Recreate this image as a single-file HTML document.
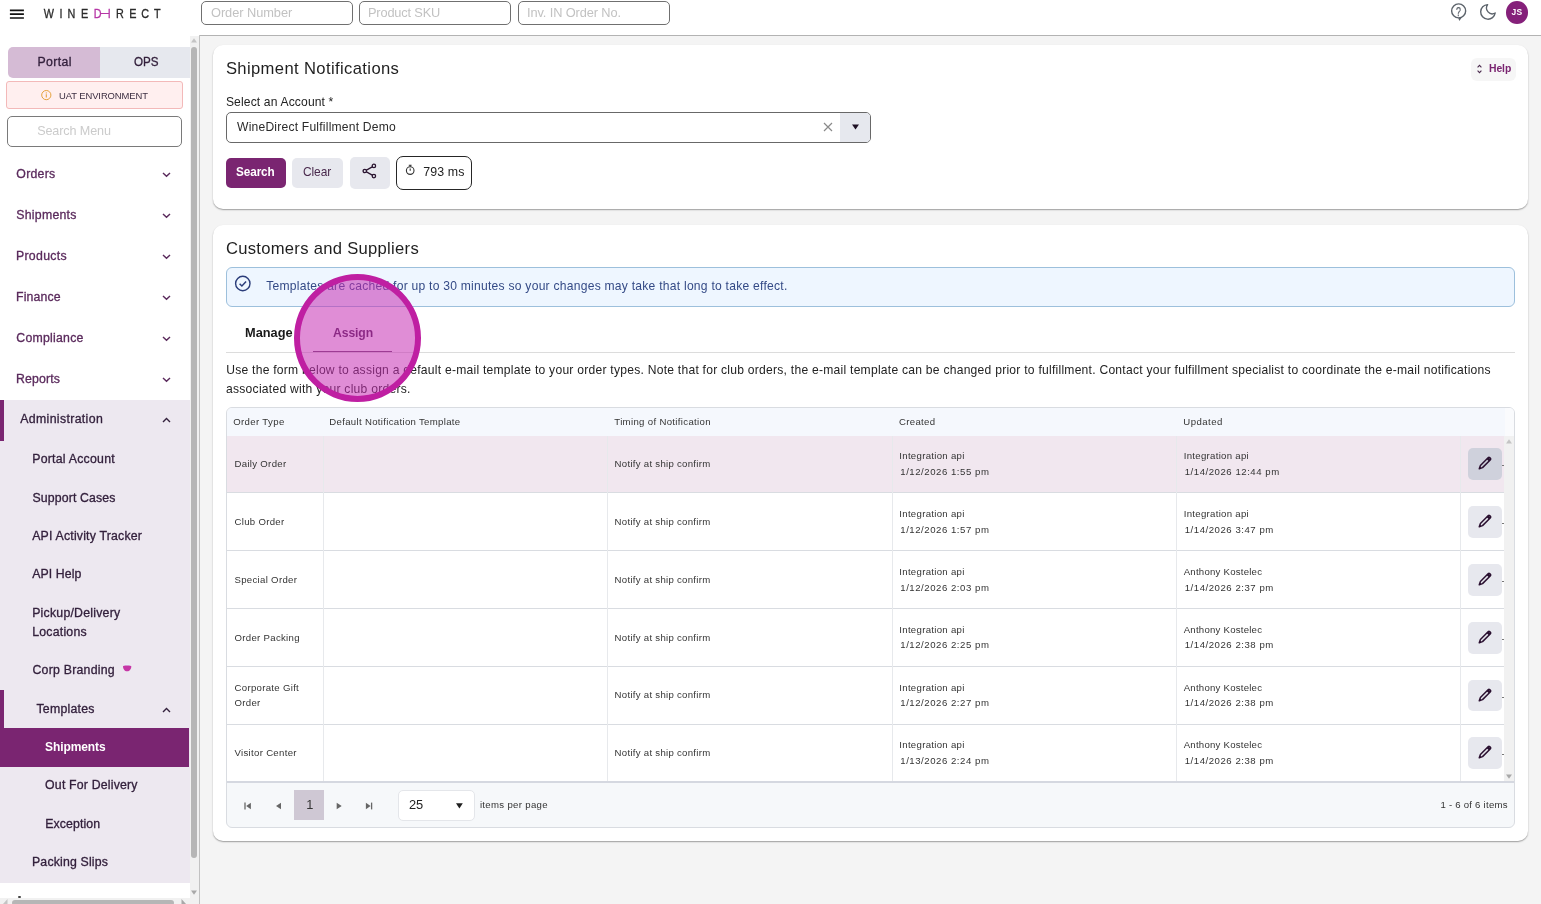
<!DOCTYPE html>
<html lang="en"><head><meta charset="utf-8"><title>Shipment Notifications</title>
<style>
*{box-sizing:border-box;margin:0;padding:0}
html,body{width:1541px;height:904px;overflow:hidden;background:#f4f4f4;font-family:"Liberation Sans",sans-serif;color:#222}
.a{position:absolute;white-space:nowrap}
#txt{position:absolute;left:0;top:0;width:1541px;height:904px;will-change:transform}
.inp{height:24.5px;top:0.5px;border:1px solid #707070;border-radius:5px;background:#fff}
.card{background:#fff;border-radius:10px;box-shadow:0 1px 1.5px rgba(0,0,0,.36)}
.hl{left:227px;width:1277px;height:1px;background:#d9dce1}
.vl{width:1px;background:#e7e9ec;top:436px;height:346px}
.eb{left:1468px;width:34px;height:31.5px;border-radius:5px;background:#e7e8ee}
.chev{left:162px}
</style></head><body>
<div class="a" style="left:0;top:0;width:1541px;height:36px;background:#fff"></div>
<div class="a" style="left:199px;top:35px;width:1342px;height:1px;background:#b3b3b3"></div>
<svg class="a" style="left:9px;top:8px" width="16" height="12" viewBox="0 0 16 12"><path d="M.9 2.4h14M.9 6.2h14M.9 10h14" stroke="#111" stroke-width="1.7"/></svg>
<svg class="a" style="left:0;top:0;will-change:transform" width="200" height="30" viewBox="0 0 200 30"><text transform="scale(0.88,1)" x="49.71 67.57 76.72 91.98 106.66 122.40 131.88 146.76 160.48 175.12" y="17.8" font-family="Liberation Sans, sans-serif" font-size="12.3" fill="#2b2b2b" stroke="#2b2b2b" stroke-width=".3">WINE<tspan fill="#b636a6" stroke="#b636a6">DI</tspan>RECT</text></svg>
<div class="a" style="left:101px;top:12.8px;width:8px;height:1.2px;background:#b636a6"></div>
<div class="a inp" style="left:201px;width:152px"></div>
<div class="a inp" style="left:359px;width:152px"></div>
<div class="a inp" style="left:518px;width:152px"></div>
<svg class="a" style="left:1450px;top:2px" width="18" height="20" viewBox="0 0 18 20"><circle cx="8.65" cy="8.9" r="7" fill="none" stroke="#5c636b" stroke-width="1.4"/><path d="M8.3 16.1L9.3 18.9 12 15.2z" fill="#5c636b"/></svg>
<svg class="a" style="left:1479px;top:3px" width="18" height="18" viewBox="0 0 18 18"><path d="M8.6 1.6A7.3 7.3 0 1 0 16.2 10 5.8 5.8 0 0 1 8.6 1.6z" fill="none" stroke="#5c636b" stroke-width="1.4" stroke-linejoin="round"/></svg>
<div class="a" style="left:1506px;top:1px;width:22px;height:22.5px;border-radius:50%;background:#85207a"></div>
<div class="a" style="left:0;top:36px;width:190px;height:868px;background:#fff"></div>
<div class="a" style="left:8px;top:47px;width:92px;height:30.5px;background:#d5bbd5;border-radius:5px 0 0 5px"></div>
<div class="a" style="left:100px;top:47px;width:90px;height:30.5px;background:#e6e8ee"></div>
<div class="a" style="left:6px;top:81px;width:177px;height:28px;background:#ffefef;border:1px solid #f3b9b9;border-radius:3px"></div>
<svg class="a" style="left:40px;top:89px" width="12" height="12" viewBox="0 0 12 12"><circle cx="6.3" cy="6.1" r="4.6" fill="none" stroke="#e6a23c" stroke-width="1"/><path d="M6.3 5.3v3.2" stroke="#e6a23c" stroke-width="1.1"/><circle cx="6.3" cy="3.9" r=".6" fill="#e6a23c"/></svg>
<div class="a" style="left:7px;top:116px;width:175px;height:31px;border:1px solid #7a7a7a;border-radius:5px;background:#fff"></div>
<svg class="a" style="left:162px;top:171.5px" width="9" height="6" viewBox="0 0 9 6"><path d="M1 .9L4.5 4.3 8 .9" fill="none" stroke="#5a2a5c" stroke-width="1.4"/></svg>
<svg class="a" style="left:162px;top:212.5px" width="9" height="6" viewBox="0 0 9 6"><path d="M1 .9L4.5 4.3 8 .9" fill="none" stroke="#5a2a5c" stroke-width="1.4"/></svg>
<svg class="a" style="left:162px;top:253.5px" width="9" height="6" viewBox="0 0 9 6"><path d="M1 .9L4.5 4.3 8 .9" fill="none" stroke="#5a2a5c" stroke-width="1.4"/></svg>
<svg class="a" style="left:162px;top:294.5px" width="9" height="6" viewBox="0 0 9 6"><path d="M1 .9L4.5 4.3 8 .9" fill="none" stroke="#5a2a5c" stroke-width="1.4"/></svg>
<svg class="a" style="left:162px;top:335.5px" width="9" height="6" viewBox="0 0 9 6"><path d="M1 .9L4.5 4.3 8 .9" fill="none" stroke="#5a2a5c" stroke-width="1.4"/></svg>
<svg class="a" style="left:162px;top:376.5px" width="9" height="6" viewBox="0 0 9 6"><path d="M1 .9L4.5 4.3 8 .9" fill="none" stroke="#5a2a5c" stroke-width="1.4"/></svg>
<div class="a" style="left:0;top:400px;width:190px;height:483px;background:#ede8f0"></div>
<div class="a" style="left:0;top:400px;width:4px;height:41px;background:#7a2571"></div>
<div class="a" style="left:0;top:690px;width:4px;height:38px;background:#7a2571"></div>
<div class="a" style="left:0;top:728px;width:189px;height:38.5px;background:#7a2571"></div>
<svg class="a" style="left:162px;top:417px" width="9" height="6" viewBox="0 0 9 6"><path d="M1 4.9L4.5 1.5 8 4.9" fill="none" stroke="#33203c" stroke-width="1.4"/></svg>
<svg class="a" style="left:162px;top:707px" width="9" height="6" viewBox="0 0 9 6"><path d="M1 4.9L4.5 1.5 8 4.9" fill="none" stroke="#33203c" stroke-width="1.4"/></svg>
<svg class="a" style="left:122px;top:662px" width="11" height="11" viewBox="0 0 11 11"><ellipse cx="5.1" cy="3.2" rx="3.2" ry="1.2" fill="#e8eef8"/><path d="M1 4.2C1 3.7 2.5 3.5 5.1 3.5S9.3 3.7 9.3 4.2C9.3 7 7.6 9.3 5.1 9.3S1 7 1 4.2z" fill="#c636a6"/></svg>
<div class="a" style="left:18px;top:896px;width:3px;height:2px;background:#444;border-radius:1px"></div>
<div class="a" style="left:189.5px;top:36px;width:9.5px;height:868px;background:#f1f1f1"></div>
<svg class="a" style="left:191px;top:38px" width="6" height="5" viewBox="0 0 6 5"><path d="M0 4.5L3 .3 6 4.5z" fill="#c4c4c4"/></svg>
<div class="a" style="left:191px;top:47px;width:6px;height:811px;background:#b6b6b6;border-radius:3px"></div>
<svg class="a" style="left:191px;top:890px" width="6" height="5" viewBox="0 0 6 5"><path d="M0 .5L3 4.7 6 .5z" fill="#a8a8a8"/></svg>
<div class="a" style="left:0;top:898px;width:189.5px;height:6px;background:#f1f1f1"></div>
<div class="a" style="left:12px;top:900px;width:162px;height:6px;background:#b6b6b6;border-radius:3px"></div>
<svg class="a" style="left:181px;top:899px" width="6" height="6" viewBox="0 0 6 6"><path d="M.5 0L5 5 .5 10z" fill="#a8a8a8"/></svg>
<svg class="a" style="left:2px;top:899px" width="6" height="6" viewBox="0 0 6 6"><path d="M5.5 0L1 5 5.5 10z" fill="#c4c4c4"/></svg>
<div class="a" style="left:199px;top:35px;width:1px;height:869px;background:#c2c2c2"></div>
<div class="a card" style="left:212.5px;top:45px;width:1315.5px;height:164px"></div>
<div class="a" style="left:226px;top:112px;width:645px;height:31px;border:1px solid #686868;border-radius:5px;background:#fff;overflow:hidden"><div class="a" style="right:0;top:0;width:30px;height:29px;background:#e6e8ee"></div></div>
<svg class="a" style="left:823px;top:122px" width="10" height="10" viewBox="0 0 10 10"><path d="M1 1l8 8M9 1l-8 8" stroke="#8a8a8a" stroke-width="1.2"/></svg>
<svg class="a" style="left:852px;top:124px" width="7" height="6" viewBox="0 0 7 6"><path d="M0 .4h7L3.5 5.4z" fill="#1e1024"/></svg>
<div class="a" style="left:226px;top:158px;width:60px;height:30px;border-radius:5px;background:#7a2571"></div>
<div class="a" style="left:292.2px;top:158px;width:50.6px;height:29.5px;border-radius:5px;background:#e7e8ee"></div>
<div class="a" style="left:350px;top:157px;width:40px;height:32px;border-radius:5px;background:#e7e8ee"></div>
<svg class="a" style="left:361px;top:163px" width="17" height="17" viewBox="0 0 17 17"><path d="M12.6 3.1L4 8l8.6 4.9" fill="none" stroke="#2a1430" stroke-width="1.4"/><circle cx="12.9" cy="2.9" r="1.7" fill="#e7e8ee" stroke="#2a1430" stroke-width="1.3"/><circle cx="12.9" cy="13.1" r="1.7" fill="#e7e8ee" stroke="#2a1430" stroke-width="1.3"/><circle cx="3.8" cy="8" r="1.7" fill="#e7e8ee" stroke="#2a1430" stroke-width="1.3"/></svg>
<div class="a" style="left:396px;top:156px;width:76px;height:33.5px;border-radius:7px;border:1px solid #262626;background:#fff"></div>
<svg class="a" style="left:404px;top:163px" width="12" height="13" viewBox="0 0 12 13"><circle cx="6.2" cy="7.6" r="3.8" fill="none" stroke="#333" stroke-width="1.1"/><path d="M4.8 2.2h2.8M6.2 2.4v1.4M6.2 5.6v2.2" stroke="#333" stroke-width="1.1"/></svg>
<div class="a" style="left:1471px;top:58px;width:44.5px;height:22.5px;border-radius:6px;background:#f6f6f6"></div>
<svg class="a" style="left:1476px;top:63px" width="7" height="12" viewBox="0 0 7 12"><path d="M1.6 4.3L3.5 2.4 5.4 4.3M1.6 7.7L3.5 9.6 5.4 7.7" fill="none" stroke="#4a2a4d" stroke-width="1.1"/></svg>
<div class="a card" style="left:212.5px;top:225px;width:1315.5px;height:616px"></div>
<div class="a" style="left:226px;top:267px;width:1288.7px;height:39.5px;border:1px solid #9dc0dc;border-radius:6px;background:#eef6ff"></div>
<svg class="a" style="left:234px;top:275px" width="17" height="17" viewBox="0 0 17 17"><circle cx="8.8" cy="8.5" r="7.2" fill="none" stroke="#2b3d7a" stroke-width="1.4"/><path d="M5.6 8.7l2.3 2.3 4.2-4.4" fill="none" stroke="#2b3d7a" stroke-width="1.5"/></svg>
<div class="a" style="left:226px;top:352px;width:1288.7px;height:1px;background:#dcdcdc"></div>
<div class="a" style="left:313px;top:351px;width:79px;height:1px;background:#6b4a6e"></div>
<div class="a" style="left:226px;top:407px;width:1289px;height:421px;border:1px solid #d9dce1;border-radius:6px;background:#f6f8fa"></div>
<div class="a" style="left:227px;top:408px;width:1287px;height:28px;background:#f5f8fd;border-radius:5px 5px 0 0"></div>
<div class="a" style="left:1505px;top:408px;width:9px;height:28px;background:#fafbfd;border-radius:0 5px 0 0"></div>
<div class="a" style="left:227px;top:436px;width:1277px;height:57px;background:#f1e7ef"></div>
<div class="a" style="left:227px;top:493px;width:1277px;height:289px;background:#fff"></div>
<div class="a hl" style="top:492px"></div>
<div class="a hl" style="top:550px"></div>
<div class="a hl" style="top:608px"></div>
<div class="a hl" style="top:666px"></div>
<div class="a hl" style="top:724px"></div>
<div class="a vl" style="left:323px"></div>
<div class="a vl" style="left:607px"></div>
<div class="a vl" style="left:892px"></div>
<div class="a vl" style="left:1176px"></div>
<div class="a vl" style="left:1460px"></div>
<div class="a eb" style="top:448px;background:#cfd1dc"></div>
<svg class="a" style="left:1476.8px;top:455.2px" width="16" height="16" viewBox="-8 -8 16 16"><g transform="rotate(-45)"><path d="M-8.1 0L-5-1.5H6.2a.9.9 0 0 1 .9.9V.6a.9.9 0 0 1-.9.9H-5z" fill="none" stroke="#2a1030" stroke-width="1.5" stroke-linejoin="round"/><path d="M3.9-1.5h2.6v3H3.9z" fill="#2a1030"/></g></svg>
<div class="a" style="left:1502px;top:465px;width:2px;height:1px;background:#777"></div>
<div class="a eb" style="top:506px;background:#e7e8ee"></div>
<svg class="a" style="left:1476.8px;top:513.2px" width="16" height="16" viewBox="-8 -8 16 16"><g transform="rotate(-45)"><path d="M-8.1 0L-5-1.5H6.2a.9.9 0 0 1 .9.9V.6a.9.9 0 0 1-.9.9H-5z" fill="none" stroke="#2a1030" stroke-width="1.5" stroke-linejoin="round"/><path d="M3.9-1.5h2.6v3H3.9z" fill="#2a1030"/></g></svg>
<div class="a" style="left:1502px;top:523px;width:2px;height:1px;background:#777"></div>
<div class="a eb" style="top:564px;background:#e7e8ee"></div>
<svg class="a" style="left:1476.8px;top:571.2px" width="16" height="16" viewBox="-8 -8 16 16"><g transform="rotate(-45)"><path d="M-8.1 0L-5-1.5H6.2a.9.9 0 0 1 .9.9V.6a.9.9 0 0 1-.9.9H-5z" fill="none" stroke="#2a1030" stroke-width="1.5" stroke-linejoin="round"/><path d="M3.9-1.5h2.6v3H3.9z" fill="#2a1030"/></g></svg>
<div class="a" style="left:1502px;top:581px;width:2px;height:1px;background:#777"></div>
<div class="a eb" style="top:622px;background:#e7e8ee"></div>
<svg class="a" style="left:1476.8px;top:629.2px" width="16" height="16" viewBox="-8 -8 16 16"><g transform="rotate(-45)"><path d="M-8.1 0L-5-1.5H6.2a.9.9 0 0 1 .9.9V.6a.9.9 0 0 1-.9.9H-5z" fill="none" stroke="#2a1030" stroke-width="1.5" stroke-linejoin="round"/><path d="M3.9-1.5h2.6v3H3.9z" fill="#2a1030"/></g></svg>
<div class="a" style="left:1502px;top:639px;width:2px;height:1px;background:#777"></div>
<div class="a eb" style="top:679.5px;background:#e7e8ee"></div>
<svg class="a" style="left:1476.8px;top:686.7px" width="16" height="16" viewBox="-8 -8 16 16"><g transform="rotate(-45)"><path d="M-8.1 0L-5-1.5H6.2a.9.9 0 0 1 .9.9V.6a.9.9 0 0 1-.9.9H-5z" fill="none" stroke="#2a1030" stroke-width="1.5" stroke-linejoin="round"/><path d="M3.9-1.5h2.6v3H3.9z" fill="#2a1030"/></g></svg>
<div class="a" style="left:1502px;top:696.5px;width:2px;height:1px;background:#777"></div>
<div class="a eb" style="top:737px;background:#e7e8ee"></div>
<svg class="a" style="left:1476.8px;top:744.2px" width="16" height="16" viewBox="-8 -8 16 16"><g transform="rotate(-45)"><path d="M-8.1 0L-5-1.5H6.2a.9.9 0 0 1 .9.9V.6a.9.9 0 0 1-.9.9H-5z" fill="none" stroke="#2a1030" stroke-width="1.5" stroke-linejoin="round"/><path d="M3.9-1.5h2.6v3H3.9z" fill="#2a1030"/></g></svg>
<div class="a" style="left:1502px;top:754px;width:2px;height:1px;background:#777"></div>
<div class="a" style="left:1504px;top:436px;width:10px;height:346px;background:#f1f1f1"></div>
<svg class="a" style="left:1506px;top:439px" width="6" height="5" viewBox="0 0 6 5"><path d="M0 4.5L3 .3 6 4.5z" fill="#c4c4c4"/></svg>
<svg class="a" style="left:1506px;top:774px" width="6" height="5" viewBox="0 0 6 5"><path d="M0 .5L3 4.7 6 .5z" fill="#a8a8a8"/></svg>
<div class="a" style="left:227px;top:781px;width:1287px;height:2px;background:#d5d8e0"></div>
<div class="a" style="left:294px;top:790px;width:30px;height:30px;background:#cfc8d4"></div>
<svg class="a" style="left:244px;top:801.5px" width="8" height="8" viewBox="0 0 8 8"><path d="M1 .6v6.8" stroke="#666" stroke-width="1.3"/><path d="M6.9 .8v6.4L2.2 4z" fill="#666"/></svg>
<svg class="a" style="left:275px;top:801.5px" width="8" height="8" viewBox="0 0 8 8"><path d="M6 .8v6.4L1 4z" fill="#666"/></svg>
<svg class="a" style="left:335px;top:801.5px" width="8" height="8" viewBox="0 0 8 8"><path d="M1.7 .8v6.4L6.7 4z" fill="#666"/></svg>
<svg class="a" style="left:365px;top:801.5px" width="8" height="8" viewBox="0 0 8 8"><path d="M6.6 .6v6.8" stroke="#666" stroke-width="1.3"/><path d="M.9 .8v6.4L5.6 4z" fill="#666"/></svg>
<div class="a" style="left:398px;top:790px;width:76.5px;height:30.5px;background:#fff;border:1px solid #e4e6ea;border-radius:5px"></div>
<svg class="a" style="left:456px;top:802.5px" width="7" height="6" viewBox="0 0 7 6"><path d="M0 .3h6.8L3.4 5.6z" fill="#1f1f1f"/></svg>

<!-- TEXT -->
<div id="txt">
<div class="a" style="left:211.00px;top:4px;font-size:12.8px;line-height:17px;letter-spacing:-0.047px;color:#c2c2c2">Order Number</div>
<div class="a" style="left:368.00px;top:4px;font-size:12.8px;line-height:17px;letter-spacing:-0.173px;color:#c2c2c2">Product SKU</div>
<div class="a" style="left:527.00px;top:4px;font-size:12.8px;line-height:17px;letter-spacing:-0.107px;color:#c2c2c2">Inv. IN Order No.</div>
<div class="a" style="left:37.50px;top:54px;font-size:12.3px;line-height:16px;letter-spacing:0.362px;color:#33203c;-webkit-text-stroke:0.3px #33203c">Portal</div>
<div class="a" style="left:133.80px;top:54px;font-size:12.3px;line-height:16px;letter-spacing:-0.100px;color:#33203c;-webkit-text-stroke:0.3px #33203c;transform-origin:0 50%;transform:scaleX(0.9465)">OPS</div>
<div class="a" style="left:59.10px;top:89px;font-size:9.8px;line-height:13px;letter-spacing:-0.100px;color:#3d2f42;transform-origin:0 50%;transform:scaleX(0.9633)">UAT ENVIRONMENT</div>
<div class="a" style="left:37.20px;top:123px;font-size:12.6px;line-height:16px;letter-spacing:-0.110px;color:#cbcbcb">Search Menu</div>
<div class="a" style="left:16.30px;top:166px;font-size:12.3px;line-height:16px;letter-spacing:0.273px;color:#5a2a5c;-webkit-text-stroke:0.3px #5a2a5c">Orders</div>
<div class="a" style="left:16.30px;top:207px;font-size:12.3px;line-height:16px;letter-spacing:0.256px;color:#5a2a5c;-webkit-text-stroke:0.3px #5a2a5c">Shipments</div>
<div class="a" style="left:16.00px;top:248px;font-size:12.3px;line-height:16px;letter-spacing:0.289px;color:#5a2a5c;-webkit-text-stroke:0.3px #5a2a5c">Products</div>
<div class="a" style="left:16.00px;top:289px;font-size:12.3px;line-height:16px;letter-spacing:0.149px;color:#5a2a5c;-webkit-text-stroke:0.3px #5a2a5c">Finance</div>
<div class="a" style="left:16.30px;top:330px;font-size:12.3px;line-height:16px;letter-spacing:0.245px;color:#5a2a5c;-webkit-text-stroke:0.3px #5a2a5c">Compliance</div>
<div class="a" style="left:16.00px;top:371px;font-size:12.3px;line-height:16px;letter-spacing:0.132px;color:#5a2a5c;-webkit-text-stroke:0.3px #5a2a5c">Reports</div>
<div class="a" style="left:20.20px;top:411px;font-size:12.3px;line-height:16px;letter-spacing:0.356px;color:#33203c;-webkit-text-stroke:0.3px #33203c">Administration</div>
<div class="a" style="left:32.20px;top:451px;font-size:12.3px;line-height:16px;letter-spacing:0.242px;color:#33203c;-webkit-text-stroke:0.3px #33203c">Portal Account</div>
<div class="a" style="left:32.50px;top:490px;font-size:12.3px;line-height:16px;letter-spacing:0.126px;color:#33203c;-webkit-text-stroke:0.3px #33203c">Support Cases</div>
<div class="a" style="left:32.20px;top:528px;font-size:12.3px;line-height:16px;letter-spacing:0.199px;color:#33203c;-webkit-text-stroke:0.3px #33203c">API Activity Tracker</div>
<div class="a" style="left:32.20px;top:566px;font-size:12.3px;line-height:16px;letter-spacing:0.102px;color:#33203c;-webkit-text-stroke:0.3px #33203c">API Help</div>
<div class="a" style="left:32.20px;top:605px;font-size:12.3px;line-height:16px;letter-spacing:0.229px;color:#33203c;-webkit-text-stroke:0.3px #33203c">Pickup/Delivery</div>
<div class="a" style="left:32.20px;top:624px;font-size:12.3px;line-height:16px;letter-spacing:0.226px;color:#33203c;-webkit-text-stroke:0.3px #33203c">Locations</div>
<div class="a" style="left:32.50px;top:662px;font-size:12.3px;line-height:16px;letter-spacing:0.237px;color:#33203c;-webkit-text-stroke:0.3px #33203c">Corp Branding</div>
<div class="a" style="left:36.50px;top:701px;font-size:12.3px;line-height:16px;letter-spacing:0.226px;color:#33203c;-webkit-text-stroke:0.3px #33203c">Templates</div>
<div class="a" style="left:44.70px;top:738px;font-size:12.8px;line-height:17px;letter-spacing:-0.100px;color:#fff;font-weight:bold;transform-origin:0 50%;transform:scaleX(0.9380)">Shipments</div>
<div class="a" style="left:45.10px;top:777px;font-size:12.3px;line-height:16px;letter-spacing:0.189px;color:#33203c;-webkit-text-stroke:0.3px #33203c">Out For Delivery</div>
<div class="a" style="left:45.20px;top:816px;font-size:12.3px;line-height:16px;letter-spacing:0.104px;color:#33203c;-webkit-text-stroke:0.3px #33203c">Exception</div>
<div class="a" style="left:32.00px;top:854px;font-size:12.3px;line-height:16px;letter-spacing:0.169px;color:#33203c;-webkit-text-stroke:0.3px #33203c">Packing Slips</div>
<div class="a" style="left:225.90px;top:58px;font-size:16.6px;line-height:22px;letter-spacing:0.376px;color:#1f1f1f">Shipment Notifications</div>
<div class="a" style="left:225.90px;top:94px;font-size:12.1px;line-height:16px;letter-spacing:0.142px;color:#222">Select an Account *</div>
<div class="a" style="left:237.00px;top:119px;font-size:12.1px;line-height:16px;letter-spacing:0.212px;color:#2a2a2a">WineDirect Fulfillment Demo</div>
<div class="a" style="left:236.40px;top:163px;font-size:12.8px;line-height:17px;letter-spacing:-0.100px;color:#fff;font-weight:bold;transform-origin:0 50%;transform:scaleX(0.9182)">Search</div>
<div class="a" style="left:303.00px;top:163px;font-size:12.8px;line-height:17px;letter-spacing:-0.100px;color:#4a2a4d;transform-origin:0 50%;transform:scaleX(0.9347)">Clear</div>
<div class="a" style="left:423.30px;top:164px;font-size:12.4px;line-height:16px;letter-spacing:0.113px;color:#222">793 ms</div>
<div class="a" style="left:1489.30px;top:61px;font-size:11px;line-height:14px;letter-spacing:-0.100px;color:#7a2571;font-weight:bold;transform-origin:0 50%;transform:scaleX(0.9447)">Help</div>
<div class="a" style="left:225.90px;top:238px;font-size:16.6px;line-height:22px;letter-spacing:0.295px;color:#1f1f1f">Customers and Suppliers</div>
<div class="a" style="left:266.20px;top:278px;font-size:12.1px;line-height:16px;letter-spacing:0.247px;color:#344a86">Templates are cached for up to 30 minutes so your changes may take that long to take effect.</div>
<div class="a" style="left:245.00px;top:324px;font-size:12.8px;line-height:17px;letter-spacing:-0.006px;color:#1a1a1a;font-weight:bold">Manage</div>
<div class="a" style="left:332.50px;top:325px;font-size:12.6px;line-height:16px;letter-spacing:-0.100px;color:#431f4b;font-weight:bold;transform-origin:0 50%;transform:scaleX(0.9683)">Assign</div>
<div class="a" style="left:226.20px;top:362px;font-size:12.1px;line-height:16px;letter-spacing:0.248px;color:#222">Use the form below to assign a default e-mail template to your order types. Note that for club orders, the e-mail template can be changed prior to fulfillment. Contact your fulfillment specialist to coordinate the e-mail notifications</div>
<div class="a" style="left:226.00px;top:381px;font-size:12.1px;line-height:16px;letter-spacing:0.258px;color:#222">associated with your club orders.</div>
<div class="a" style="left:233.20px;top:416px;font-size:9.6px;line-height:12px;letter-spacing:0.361px;color:#343434">Order Type</div>
<div class="a" style="left:329.30px;top:416px;font-size:9.6px;line-height:12px;letter-spacing:0.319px;color:#343434">Default Notification Template</div>
<div class="a" style="left:614.30px;top:416px;font-size:9.6px;line-height:12px;letter-spacing:0.334px;color:#343434">Timing of Notification</div>
<div class="a" style="left:898.90px;top:416px;font-size:9.6px;line-height:12px;letter-spacing:0.351px;color:#343434">Created</div>
<div class="a" style="left:1183.30px;top:416px;font-size:9.6px;line-height:12px;letter-spacing:0.461px;color:#343434">Updated</div>
<div class="a" style="left:234.50px;top:458px;font-size:9.6px;line-height:12px;letter-spacing:0.310px;color:#343434">Daily Order</div>
<div class="a" style="left:614.60px;top:458px;font-size:9.6px;line-height:12px;letter-spacing:0.287px;color:#343434">Notify at ship confirm</div>
<div class="a" style="left:899.30px;top:450px;font-size:9.6px;line-height:12px;letter-spacing:0.302px;color:#343434">Integration api</div>
<div class="a" style="left:900.30px;top:466px;font-size:9.6px;line-height:12px;letter-spacing:0.536px;color:#343434">1/12/2026 1:55 pm</div>
<div class="a" style="left:1183.70px;top:450px;font-size:9.6px;line-height:12px;letter-spacing:0.302px;color:#343434">Integration api</div>
<div class="a" style="left:1184.70px;top:466px;font-size:9.6px;line-height:12px;letter-spacing:0.538px;color:#343434">1/14/2026 12:44 pm</div>
<div class="a" style="left:234.50px;top:516px;font-size:9.6px;line-height:12px;letter-spacing:0.310px;color:#343434">Club Order</div>
<div class="a" style="left:614.60px;top:516px;font-size:9.6px;line-height:12px;letter-spacing:0.287px;color:#343434">Notify at ship confirm</div>
<div class="a" style="left:899.30px;top:508px;font-size:9.6px;line-height:12px;letter-spacing:0.302px;color:#343434">Integration api</div>
<div class="a" style="left:900.30px;top:524px;font-size:9.6px;line-height:12px;letter-spacing:0.536px;color:#343434">1/12/2026 1:57 pm</div>
<div class="a" style="left:1183.70px;top:508px;font-size:9.6px;line-height:12px;letter-spacing:0.302px;color:#343434">Integration api</div>
<div class="a" style="left:1184.70px;top:524px;font-size:9.6px;line-height:12px;letter-spacing:0.536px;color:#343434">1/14/2026 3:47 pm</div>
<div class="a" style="left:234.50px;top:574px;font-size:9.6px;line-height:12px;letter-spacing:0.310px;color:#343434">Special Order</div>
<div class="a" style="left:614.60px;top:574px;font-size:9.6px;line-height:12px;letter-spacing:0.287px;color:#343434">Notify at ship confirm</div>
<div class="a" style="left:899.30px;top:566px;font-size:9.6px;line-height:12px;letter-spacing:0.302px;color:#343434">Integration api</div>
<div class="a" style="left:900.30px;top:582px;font-size:9.6px;line-height:12px;letter-spacing:0.536px;color:#343434">1/12/2026 2:03 pm</div>
<div class="a" style="left:1183.70px;top:566px;font-size:9.6px;line-height:12px;letter-spacing:0.242px;color:#343434">Anthony Kostelec</div>
<div class="a" style="left:1184.70px;top:582px;font-size:9.6px;line-height:12px;letter-spacing:0.536px;color:#343434">1/14/2026 2:37 pm</div>
<div class="a" style="left:234.50px;top:632px;font-size:9.6px;line-height:12px;letter-spacing:0.310px;color:#343434">Order Packing</div>
<div class="a" style="left:614.60px;top:632px;font-size:9.6px;line-height:12px;letter-spacing:0.287px;color:#343434">Notify at ship confirm</div>
<div class="a" style="left:899.30px;top:624px;font-size:9.6px;line-height:12px;letter-spacing:0.302px;color:#343434">Integration api</div>
<div class="a" style="left:900.30px;top:639px;font-size:9.6px;line-height:12px;letter-spacing:0.536px;color:#343434">1/12/2026 2:25 pm</div>
<div class="a" style="left:1183.70px;top:624px;font-size:9.6px;line-height:12px;letter-spacing:0.242px;color:#343434">Anthony Kostelec</div>
<div class="a" style="left:1184.70px;top:639px;font-size:9.6px;line-height:12px;letter-spacing:0.536px;color:#343434">1/14/2026 2:38 pm</div>
<div class="a" style="left:234.50px;top:682px;font-size:9.6px;line-height:12px;letter-spacing:0.310px;color:#343434">Corporate Gift</div>
<div class="a" style="left:234.50px;top:697px;font-size:9.6px;line-height:12px;letter-spacing:0.310px;color:#343434">Order</div>
<div class="a" style="left:614.60px;top:689px;font-size:9.6px;line-height:12px;letter-spacing:0.287px;color:#343434">Notify at ship confirm</div>
<div class="a" style="left:899.30px;top:682px;font-size:9.6px;line-height:12px;letter-spacing:0.302px;color:#343434">Integration api</div>
<div class="a" style="left:900.30px;top:697px;font-size:9.6px;line-height:12px;letter-spacing:0.536px;color:#343434">1/12/2026 2:27 pm</div>
<div class="a" style="left:1183.70px;top:682px;font-size:9.6px;line-height:12px;letter-spacing:0.242px;color:#343434">Anthony Kostelec</div>
<div class="a" style="left:1184.70px;top:697px;font-size:9.6px;line-height:12px;letter-spacing:0.536px;color:#343434">1/14/2026 2:38 pm</div>
<div class="a" style="left:234.50px;top:747px;font-size:9.6px;line-height:12px;letter-spacing:0.310px;color:#343434">Visitor Center</div>
<div class="a" style="left:614.60px;top:747px;font-size:9.6px;line-height:12px;letter-spacing:0.287px;color:#343434">Notify at ship confirm</div>
<div class="a" style="left:899.30px;top:739px;font-size:9.6px;line-height:12px;letter-spacing:0.302px;color:#343434">Integration api</div>
<div class="a" style="left:900.30px;top:755px;font-size:9.6px;line-height:12px;letter-spacing:0.536px;color:#343434">1/13/2026 2:24 pm</div>
<div class="a" style="left:1183.70px;top:739px;font-size:9.6px;line-height:12px;letter-spacing:0.242px;color:#343434">Anthony Kostelec</div>
<div class="a" style="left:1184.70px;top:755px;font-size:9.6px;line-height:12px;letter-spacing:0.536px;color:#343434">1/14/2026 2:38 pm</div>
<div class="a" style="left:306.20px;top:796px;font-size:12.8px;line-height:17px;letter-spacing:0.000px;color:#333">1</div>
<div class="a" style="left:409.10px;top:796px;font-size:13.2px;line-height:17px;letter-spacing:-0.100px;color:#222;transform-origin:0 50%;transform:scaleX(0.9765)">25</div>
<div class="a" style="left:479.90px;top:799px;font-size:9.6px;line-height:12px;letter-spacing:0.321px;color:#343434">items per page</div>
<div class="a" style="left:1440.40px;top:799px;font-size:9.6px;line-height:12px;letter-spacing:0.243px;color:#343434">1 - 6 of 6 items</div>
<div class="a" style="left:1511.50px;top:7px;font-size:8.5px;line-height:11px;letter-spacing:0.273px;color:#fff;font-weight:bold">JS</div>
<div class="a" style="left:1456.10px;top:4px;font-size:12.2px;line-height:16px;letter-spacing:0.000px;color:#5c636b;-webkit-text-stroke:0.25px #5c636b;transform-origin:0 50%;transform:scaleX(0.7286)">?</div>
</div>
<!-- highlight circle -->
<div class="a" style="left:293.5px;top:274px;width:127.5px;height:128px;border-radius:50%;border:6px solid #bf1fa2;background:rgba(199,48,180,.55)"></div>

</body></html>
